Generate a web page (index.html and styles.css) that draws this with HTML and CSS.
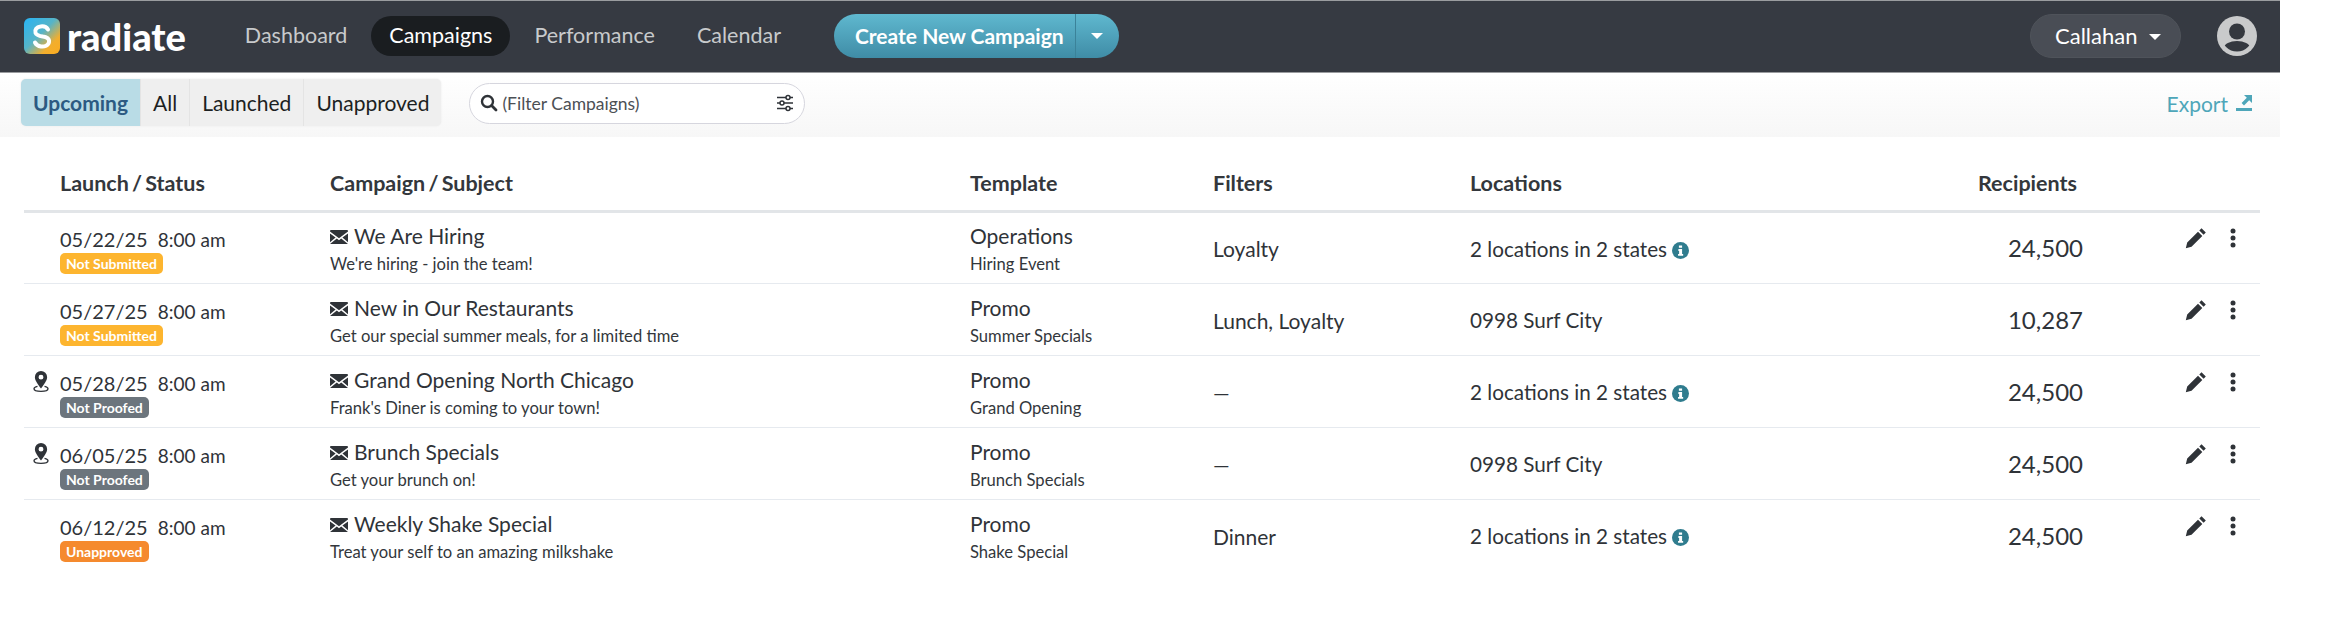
FILE: index.html
```html
<!DOCTYPE html>
<html lang="en-us">
<head>
<meta charset="UTF-8">
<title>Campaigns</title>
<link rel="stylesheet" href="styles.css">
</head>
<body>
<svg class="defs" width="0" height="0">
  <symbol id="mail" viewBox="0 0 18 14"><path fill="#2f3338" d="M0 1.5 9 8.2 18 1.5V1q0-1-1-1H1Q0 0 0 1ZM0 3.4V12.2L5.6 7.6ZM18 3.4V12.2L12.4 7.6ZM6.8 8.5 0 14H18L11.2 8.5 9 10.2Z"/></symbol>
  <symbol id="pin" viewBox="0 0 18 24"><path fill="#2f3338" fill-rule="evenodd" d="M9 0a7 7 0 0 1 7 7c0 4-4 8.500-7 13C6 15.500 2 11 2 7a7 7 0 0 1 7-7Zm0 4.200a2.800 2.800 0 1 0 0 5.600 2.800 2.800 0 0 0 0-5.600Z"/><path fill="none" stroke="#2f3338" stroke-width="1.500" d="M5 17.500C2.500 18 1 19 1 20.300 1 22 4.500 23.200 9 23.200s8-1.200 8-2.900c0-1.300-1.500-2.300-4-2.800"/></symbol>
  <symbol id="info" viewBox="0 0 16 16"><circle cx="8" cy="8" r="8" fill="#2f7c8e"/><path fill="#fff" d="M6.500 3.200h3v2.300h-3ZM6 6.700h3.500v4.500h1v1.700H5.700v-1.700h1V8.400H6Z"/></symbol>
  <symbol id="pencil" viewBox="0 0 22 22"><path fill="#2f3338" d="M16.500 1.200 20.800 5.500 18.600 7.700 14.300 3.400ZM13 4.700 17.300 9 6.500 19.800 .8 21.200 2.200 15.500Z"/></symbol>
  <symbol id="dots" viewBox="0 0 6 20"><circle cx="3" cy="3" r="2.500" fill="#2f3338"/><circle cx="3" cy="10" r="2.500" fill="#2f3338"/><circle cx="3" cy="17" r="2.500" fill="#2f3338"/></symbol>
</svg>

<header class="topbar">
  <a class="logo">
    <svg class="logo-mark" viewBox="0 0 36 36">
      <defs><linearGradient id="logograd" x1="0" y1="0" x2="1" y2="1"><stop offset="0" stop-color="#27b4f5"/><stop offset=".45" stop-color="#56b4c8"/><stop offset=".75" stop-color="#f2ae2e"/><stop offset="1" stop-color="#fbab1f"/></linearGradient></defs>
      <rect width="36" height="36" rx="6" fill="url(#logograd)"/>
      <path fill="none" stroke="#fff" stroke-width="4" stroke-linecap="round" d="M24 11.500C22.500 9 19.500 8 16.500 8.500 12.500 9 10.500 12 11.500 14.800 12.500 17.500 16 18 19 18.500 22.500 19 25.500 20.500 25 24 24.500 27.500 20.500 29 17 28.500 14 28 12 26.500 11 24.500"/>
    </svg>
    <span class="logo-text">radiate</span>
  </a>
  <nav class="nav">
    <a>Dashboard</a>
    <a class="active">Campaigns</a>
    <a>Performance</a>
    <a>Calendar</a>
  </nav>
  <div class="create-btn">
    <span class="create-label">Create New Campaign</span>
    <span class="create-caret"><i class="caret"></i></span>
  </div>
  <div class="topbar-right">
    <div class="user-pill">Callahan <i class="caret"></i></div>
    <svg class="avatar" viewBox="0 0 40 40">
      <defs><clipPath id="avclip"><circle cx="20" cy="20" r="15.500"/></clipPath></defs>
      <circle cx="20" cy="20" r="20" fill="#c9cacb"/>
      <circle cx="20" cy="15.500" r="8" fill="#34383f"/>
      <ellipse cx="20" cy="32" rx="13" ry="7" fill="#34383f" clip-path="url(#avclip)"/>
    </svg>
  </div>
</header>

<div class="subbar">
  <div class="tabs">
    <a class="tab selected">Upcoming</a>
    <a class="tab">All</a>
    <a class="tab">Launched</a>
    <a class="tab">Unapproved</a>
  </div>
  <div class="search">
    <svg class="search-icon" viewBox="0 0 18 18"><circle cx="7.500" cy="7.500" r="5.500" fill="none" stroke="#2f3338" stroke-width="2.400"/><path stroke="#2f3338" stroke-width="2.800" stroke-linecap="round" d="M11.800 11.800 16 16"/></svg>
    <span class="search-text">(Filter Campaigns)</span>
    <svg class="sliders" viewBox="0 0 18 18"><g fill="none" stroke="#2f3338" stroke-width="1.500"><path d="M1 3.500h9M14 3.500h3M1 9h3M8 9h9M1 14.500h9M14 14.500h3"/><circle cx="12" cy="3.500" r="2"/><circle cx="6" cy="9" r="2"/><circle cx="12" cy="14.500" r="2"/></g></svg>
  </div>
  <a class="export">Export
    <svg class="export-icon" viewBox="0 0 18 18"><path fill="#4ea6b9" d="M9 1h8v8l-2.800-2.800L9 11.400 6.600 9 11.800 3.800ZM1 14h16v3H1Z"/></svg>
  </a>
</div>

<table class="campaigns">
  <colgroup>
    <col class="c-launch"><col class="c-campaign"><col class="c-template"><col class="c-filters"><col class="c-locations"><col class="c-recipients"><col class="c-actions">
  </colgroup>
  <thead>
    <tr>
      <th>Launch / Status</th>
      <th>Campaign / Subject</th>
      <th>Template</th>
      <th>Filters</th>
      <th>Locations</th>
      <th>Recipients</th>
      <th></th>
    </tr>
  </thead>
  <tbody>
    <tr>
      <td class="launch"><div class="when">05/22/25 <span class="time">8:00 am</span></div><span class="badge amber">Not Submitted</span></td>
      <td class="stack"><div class="name"><svg class="mail"><use href="#mail"/></svg>We Are Hiring</div><div class="sub">We're hiring - join the team!</div></td>
      <td class="stack"><div class="tpl">Operations</div><div class="sub">Hiring Event</div></td>
      <td>Loyalty</td>
      <td class="locs">2 locations in 2 states <svg class="info"><use href="#info"/></svg></td>
      <td class="num">24,500</td>
      <td><div class="actions"><svg class="pencil"><use href="#pencil"/></svg><svg class="dots"><use href="#dots"/></svg></div></td>
    </tr>
    <tr>
      <td class="launch"><div class="when">05/27/25 <span class="time">8:00 am</span></div><span class="badge amber">Not Submitted</span></td>
      <td class="stack"><div class="name"><svg class="mail"><use href="#mail"/></svg>New in Our Restaurants</div><div class="sub">Get our special summer meals, for a limited time</div></td>
      <td class="stack"><div class="tpl">Promo</div><div class="sub">Summer Specials</div></td>
      <td>Lunch, Loyalty</td>
      <td class="locs">0998 Surf City</td>
      <td class="num">10,287</td>
      <td><div class="actions"><svg class="pencil"><use href="#pencil"/></svg><svg class="dots"><use href="#dots"/></svg></div></td>
    </tr>
    <tr>
      <td class="launch"><svg class="pin"><use href="#pin"/></svg><div class="when">05/28/25 <span class="time">8:00 am</span></div><span class="badge gray">Not Proofed</span></td>
      <td class="stack"><div class="name"><svg class="mail"><use href="#mail"/></svg>Grand Opening North Chicago</div><div class="sub">Frank's Diner is coming to your town!</div></td>
      <td class="stack"><div class="tpl">Promo</div><div class="sub">Grand Opening</div></td>
      <td>&mdash;</td>
      <td class="locs">2 locations in 2 states <svg class="info"><use href="#info"/></svg></td>
      <td class="num">24,500</td>
      <td><div class="actions"><svg class="pencil"><use href="#pencil"/></svg><svg class="dots"><use href="#dots"/></svg></div></td>
    </tr>
    <tr>
      <td class="launch"><svg class="pin"><use href="#pin"/></svg><div class="when">06/05/25 <span class="time">8:00 am</span></div><span class="badge gray">Not Proofed</span></td>
      <td class="stack"><div class="name"><svg class="mail"><use href="#mail"/></svg>Brunch Specials</div><div class="sub">Get your brunch on!</div></td>
      <td class="stack"><div class="tpl">Promo</div><div class="sub">Brunch Specials</div></td>
      <td>&mdash;</td>
      <td class="locs">0998 Surf City</td>
      <td class="num">24,500</td>
      <td><div class="actions"><svg class="pencil"><use href="#pencil"/></svg><svg class="dots"><use href="#dots"/></svg></div></td>
    </tr>
    <tr>
      <td class="launch"><div class="when">06/12/25 <span class="time">8:00 am</span></div><span class="badge orange">Unapproved</span></td>
      <td class="stack"><div class="name"><svg class="mail"><use href="#mail"/></svg>Weekly Shake Special</div><div class="sub">Treat your self to an amazing milkshake</div></td>
      <td class="stack"><div class="tpl">Promo</div><div class="sub">Shake Special</div></td>
      <td>Dinner</td>
      <td class="locs">2 locations in 2 states <svg class="info"><use href="#info"/></svg></td>
      <td class="num">24,500</td>
      <td><div class="actions"><svg class="pencil"><use href="#pencil"/></svg><svg class="dots"><use href="#dots"/></svg></div></td>
    </tr>
  </tbody>
</table>
</body>
</html>
```
FILE: styles.css
```css
body {
  margin: 0;
  background: white;
  color: #2f3338;
  font-family: "Lato", "Liberation Sans", sans-serif;
  overflow: hidden;
}

.defs {
  position: absolute;
}

/* Top bar */
.topbar {
  display: flex;
  align-items: center;
  box-sizing: border-box;
  width: 2280px;
  height: 73px;
  padding: 0 24px 2px;
  background-color: #363a42;
  border-top: 1px solid #9a9c9f;
  border-bottom: 1px solid #9a9c9f;
}

.logo {
  display: flex;
  align-items: center;
  gap: 7px;
  margin-right: 41px;
}

.logo-mark {
  width: 36px;
  height: 36px;
}

.logo-text {
  color: white;
  font-size: 38px;
  font-weight: 900;
  line-height: 36px;
}

.nav {
  display: flex;
  gap: 6px;
}

.nav a {
  padding: 0 18px;
  height: 40px;
  line-height: 38px;
  border-radius: 20px;
  color: #c8cacc;
  font-size: 21.500px;
}

.nav a.active {
  background-color: #1a1d20;
  color: white;
}

.create-btn {
  display: flex;
  align-items: center;
  height: 44px;
  margin-left: 35px;
  border-radius: 22px;
  background: linear-gradient(to bottom, #5fb8cf, #3f8ca6);
  color: white;
  font-size: 21px;
  font-weight: 700;
}

.create-label {
  padding: 0 11px 0 21px;
  line-height: 44px;
  border-right: 1px solid #3b8299;
}

.create-caret {
  display: flex;
  justify-content: center;
  width: 43px;
}

.caret {
  display: inline-block;
  width: 0;
  height: 0;
  border-left: 6px solid transparent;
  border-right: 6px solid transparent;
  border-top: 6px solid white;
  vertical-align: 4px;
}

.topbar-right {
  display: flex;
  align-items: center;
  margin-left: auto;
  gap: 36px;
  margin-right: -1px;
}

.user-pill {
  box-sizing: border-box;
  width: 151px;
  height: 44px;
  padding-left: 24px;
  line-height: 42px;
  border-radius: 22px;
  border: 1px solid #4f535a;
  background-color: #494d55;
  color: white;
  font-size: 22px;
}

.user-pill .caret {
  margin-left: 6px;
}

.avatar {
  width: 40px;
  height: 40px;
}

/* Tabs and search */
.subbar {
  display: flex;
  align-items: center;
  box-sizing: border-box;
  width: 2280px;
  height: 64px;
  padding: 0 27px 0 21px;
  background: linear-gradient(to bottom, white, #f7f7f7);
}

.tabs {
  display: flex;
  height: 47px;
  margin-top: -5px;
  border-radius: 5px;
  overflow: hidden;
  background-color: #efefef;
  box-shadow: 0 0 2px #e6e6e6;
  font-size: 21px;
  line-height: 47px;
}

.tab {
  padding: 0 12px;
  border-left: 1px solid #e4e4e4;
  color: #1c1f22;
}

.tab.selected {
  border-left: none;
  background-color: #b9dce6;
  color: #2c5a82;
  font-weight: 700;
}

.search {
  display: flex;
  align-items: center;
  box-sizing: border-box;
  width: 336px;
  height: 41px;
  margin-left: 28px;
  margin-top: -4px;
  padding: 0 10px 0 10px;
  border: 1px solid #d6d6de;
  border-radius: 21px;
  background-color: white;
}

.search-icon {
  width: 18px;
  height: 18px;
  margin-right: 4px;
}

.search-text {
  flex: 1;
  color: #4c5055;
  font-size: 17.500px;
}

.sliders {
  width: 18px;
  height: 18px;
}

.export {
  display: flex;
  align-items: center;
  gap: 7px;
  margin-left: auto;
  margin-top: -4px;
  color: #4ea6b9;
  font-size: 21px;
}

.export-icon {
  width: 18px;
  height: 18px;
}

/* Campaign table */
.campaigns {
  table-layout: fixed;
  width: 2236px;
  margin: 0 0 0 24px;
  border-collapse: collapse;
}

.c-launch { width: 306px; }
.c-campaign { width: 640px; }
.c-template { width: 243px; }
.c-filters { width: 257px; }
.c-locations { width: 508px; }
.c-recipients { width: 140px; }

.campaigns th {
  height: 74px;
  padding: 0 0 14px;
  box-sizing: border-box;
  vertical-align: bottom;
  text-align: left;
  color: #33373c;
  font-size: 21.500px;
  font-weight: 700;
  word-spacing: -2px;
  border-bottom: 3px solid #e2e5e8;
}

.campaigns th:first-child,
.campaigns td:first-child {
  padding-left: 36px;
}

.campaigns td {
  position: relative;
  height: 72px;
  padding: 2px 0 0;
  box-sizing: border-box;
  border-bottom: 1px solid #e6eaef;
  vertical-align: middle;
  font-size: 21px;
}

.campaigns tr:last-child td {
  border-bottom: none;
}

.campaigns td.launch {
  padding-top: 9px;
}

.campaigns td.stack {
  padding-top: 4px;
}

.when {
  font-size: 20px;
  line-height: 25px;
}

.time {
  margin-left: 5px;
  font-size: 19px;
}

.badge {
  display: inline-block;
  height: 21px;
  margin-top: 1px;
  padding: 0 6px;
  border-radius: 5px;
  color: white;
  font-size: 14px;
  font-weight: 700;
  line-height: 21px;
  vertical-align: top;
}

.amber { background-color: #fdb52f; }
.gray { background-color: #6c757d; }
.orange { background-color: #f58a2e; }

.pin {
  position: absolute;
  left: 9px;
  top: 15px;
  width: 16px;
  height: 21px;
}

.name {
  font-size: 21px;
  line-height: 28px;
}

.mail {
  width: 18px;
  height: 14px;
  margin-right: 6px;
}

.sub {
  margin-top: 2px;
  color: #33373c;
  font-size: 16.600px;
  line-height: 25px;
}

.tpl {
  font-size: 21px;
  line-height: 28px;
}

.campaigns td.locs {
  font-size: 20.700px;
}

.info {
  width: 17px;
  height: 17px;
  vertical-align: -2px;
}

.campaigns td.num {
  padding: 0 35px 0 0;
  font-size: 24px;
  text-align: right;
}

.actions {
  display: flex;
  align-items: center;
  gap: 23px;
  margin: -21px 0 0 67px;
}

.pencil {
  width: 22px;
  height: 22px;
}

.dots {
  width: 6px;
  height: 20px;
}
```
